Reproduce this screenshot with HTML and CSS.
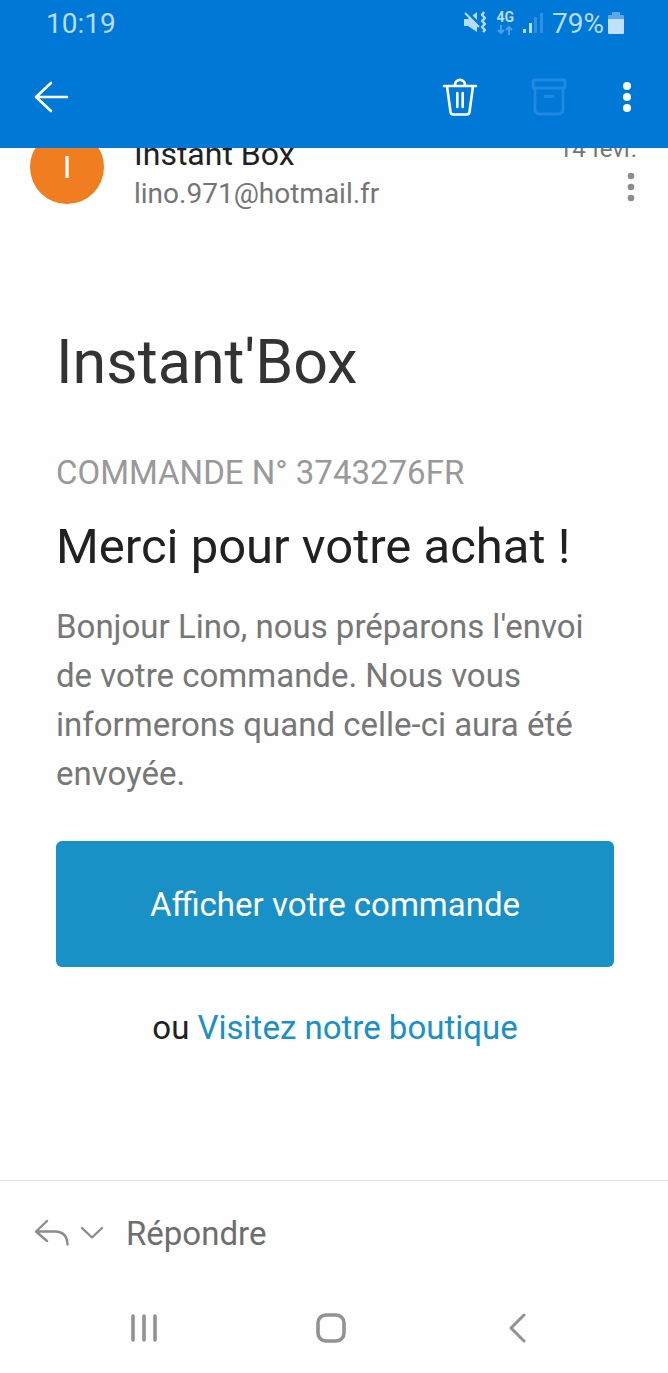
FILE: index.html
```html
<!DOCTYPE html>
<html lang="fr">
<head>
<meta charset="utf-8">
<meta name="viewport" content="width=device-width, initial-scale=1">
<title>Instant'Box – Commande</title>
<link rel="stylesheet" href="styles.css">
</head>
<body>
<div class="screen">
  <header class="top">
    <div class="status">
      <span class="clock">10:19</span>
      <div class="status-icons">
        <svg width="24" height="24" viewBox="0 0 24 24" aria-hidden="true">
          <path d="M1 8h4l9-7v20l-9-6H1z" fill="#b8dcfa"/>
          <path d="M3 0L17 14" stroke="#0078d7" stroke-width="3"/>
          <path d="M2 2L16 16" stroke="#b8dcfa" stroke-width="2"/>
          <path d="M21 1l-2 3 3 3-3 3 3 3-3 3 3 3-2 2" fill="none" stroke="#b8dcfa" stroke-width="2.4" stroke-linejoin="round"/>
        </svg>
        <div class="network">
          <span class="network-label">4G</span>
          <svg width="16" height="10" viewBox="0 0 16 10" fill="none" stroke="#4a9fe6" stroke-width="2" aria-hidden="true">
            <path d="M4 0v8M1 5l3 3 3-3M12 10V2M9 5l3-3 3 3"/>
          </svg>
        </div>
        <svg width="20" height="22" viewBox="0 0 20 22" aria-hidden="true">
          <path d="M0 17h3v4H0zM6 11h3v10H6z" fill="#b8dcfa"/>
          <path d="M11 5h3v16h-3zM17 1h3v20h-3z" fill="#3390e0"/>
        </svg>
        <div class="battery">
          <span>79%</span>
          <svg width="16" height="22" viewBox="0 0 16 22" aria-hidden="true">
            <path d="M4 0h8v3h3a1 1 0 0 1 1 1v3H0V4a1 1 0 0 1 1-1h3z" fill="#5aa9ea"/>
            <path d="M0 7h16v14a1 1 0 0 1-1 1H1a1 1 0 0 1-1-1z" fill="#c2e0fa"/>
          </svg>
        </div>
      </div>
    </div>
    <div class="toolbar">
      <button class="icon-button back" aria-label="Retour">
        <svg width="36" height="32" viewBox="0 0 36 32" fill="none" stroke="#fff" stroke-width="2.6" stroke-linecap="round" stroke-linejoin="round"><path d="M33 16H2M17 2L2 16l15 14"/></svg>
      </button>
      <button class="icon-button" aria-label="Supprimer">
        <svg width="36" height="40" viewBox="0 0 36 40" fill="none" stroke="#fff" stroke-width="2.6" stroke-linecap="round" stroke-linejoin="round"><path d="M2 9h32M5 9l3.500 26q.4 2.500 3 2.500h13q2.600 0 3-2.500L31 9M13 8.500C13 1 23 1 23 8.500M15.300 16v14M20.700 16v14"/></svg>
      </button>
      <button class="icon-button archive" aria-label="Archiver" disabled>
        <svg width="36" height="38" viewBox="0 0 36 38" fill="none" stroke="#2189e0" stroke-width="2.800" stroke-linecap="round" stroke-linejoin="round"><rect x="2" y="2" width="32" height="8" rx="1"/><path d="M4 10v21q0 5 5 5h18q5 0 5-5V10M14 18.500h8"/></svg>
      </button>
      <button class="icon-button" aria-label="Plus d'options">
        <svg width="10" height="32" viewBox="0 0 10 32" fill="#fff"><circle cx="5" cy="5" r="4"/><circle cx="5" cy="16" r="4"/><circle cx="5" cy="27" r="4"/></svg>
      </button>
    </div>
  </header>

  <main class="message">
    <section class="sender">
      <div class="avatar">I</div>
      <div class="identity">
        <div class="name">Instant Box</div>
        <div class="address">lino.971@hotmail.fr</div>
      </div>
      <div class="meta">
        <time class="date">14 févr.</time>
        <button class="icon-button" aria-label="Options du message">
          <svg width="12" height="30" viewBox="0 0 12 30" fill="#8c8c8c"><circle cx="6" cy="4" r="3.300"/><circle cx="6" cy="15" r="3.300"/><circle cx="6" cy="26" r="3.300"/></svg>
        </button>
      </div>
    </section>

    <article class="mail">
      <h1 class="shop">Instant'Box</h1>
      <p class="order">COMMANDE N° 3743276FR</p>
      <h2 class="thanks">Merci pour votre achat !</h2>
      <p class="body-text">Bonjour Lino, nous préparons l'envoi de votre commande. Nous vous informerons quand celle-ci aura été envoyée.</p>
      <a class="cta" href="#">Afficher votre commande</a>
      <p class="visit">ou <a href="#">Visitez notre boutique</a></p>
    </article>
  </main>

  <footer class="bottom">
    <div class="reply">
      <button class="icon-button" aria-label="Répondre à l'expéditeur">
        <svg width="36" height="28" viewBox="0 0 36 28" fill="none" stroke="#8c8c8c" stroke-width="2.400" stroke-linecap="round" stroke-linejoin="round"><path d="M13 2L2 12.500 13 22M2 12.500h19q12 0 12.500 13"/></svg>
      </button>
      <button class="icon-button" aria-label="Choisir le type de réponse">
        <svg width="24" height="14" viewBox="0 0 24 14" fill="none" stroke="#8c8c8c" stroke-width="2.400" stroke-linecap="round" stroke-linejoin="round"><path d="M2 2l10 9.500L22 2"/></svg>
      </button>
      <button class="reply-label">Répondre</button>
    </div>
    <nav class="system" aria-label="Navigation système">
      <button class="icon-button" aria-label="Applications récentes">
        <svg width="30" height="30" viewBox="0 0 30 30" stroke="#929292" stroke-width="3.600" stroke-linecap="round"><path d="M4 3v24M15 3v24M26 3v24"/></svg>
      </button>
      <button class="icon-button" aria-label="Accueil">
        <svg width="30" height="30" viewBox="0 0 30 30" fill="none" stroke="#929292" stroke-width="3.600"><rect x="2" y="2" width="26" height="26" rx="8"/></svg>
      </button>
      <button class="icon-button" aria-label="Page précédente">
        <svg width="30" height="30" viewBox="0 0 30 30" fill="none" stroke="#929292" stroke-width="3" stroke-linecap="round" stroke-linejoin="round"><path d="M21 2L8 15l13 13"/></svg>
      </button>
    </nav>
  </footer>
</div>
</body>
</html>
```

FILE: styles.css
```css
* {
  box-sizing: border-box;
}

body,
h1,
h2,
p {
  margin: 0;
  font-weight: 400;
}

body {
  background: #fefefe;
  color: #212121;
  font-family: Roboto, "Liberation Sans", sans-serif;
  font-size: 33px;
}

a {
  color: #1990c6;
  text-decoration: none;
}

button {
  padding: 0;
  border: 0;
  background: none;
  font: inherit;
}

svg {
  display: block;
}

.icon-button {
  display: flex;
}

.screen {
  display: flex;
  flex-direction: column;
  min-height: 100vh;
}

.top {
  position: relative;
  z-index: 1;
  background: #0078d7;
  color: #b8dcfa;
}

.status {
  display: flex;
  align-items: center;
  justify-content: space-between;
  height: 46px;
  padding: 0 44px 0 46px;
  font-size: 28px;
}

.status-icons {
  display: flex;
  align-items: center;
  gap: 9px;
}

.battery {
  display: flex;
  align-items: center;
  gap: 4px;
}

.network {
  display: flex;
  flex-direction: column;
  align-items: center;
  gap: 1px;
}

.network-label {
  font-size: 14px;
  font-weight: 700;
  line-height: 13px;
}

.toolbar {
  display: flex;
  align-items: center;
  height: 102px;
  padding: 0 36px 0 34px;
}

.back {
  margin-right: auto;
}

.archive {
  margin: 0 55px 0 53px;
}

.message {
  flex: 1;
}

.sender {
  display: flex;
  margin-top: -18px;
  padding: 0 31px 0 30px;
}

.avatar {
  display: flex;
  align-items: center;
  justify-content: center;
  width: 74px;
  height: 74px;
  border-radius: 50%;
  background: #f07d20;
  color: #fefefe;
  font-size: 32px;
}

.identity {
  flex: 1;
  margin-left: 30px;
  padding-top: 4px;
  line-height: 40px;
}

.name {
  font-size: 32px;
}

.address {
  color: #757575;
  font-size: 28px;
}

.meta {
  display: flex;
  flex-direction: column;
  align-items: flex-end;
  gap: 4px;
  color: #757575;
  font-size: 24px;
  line-height: 38px;
}

.mail {
  padding: 112px 54px 128px 56px;
}

.shop {
  color: #333;
  font-size: 61px;
  line-height: 72px;
}

.order {
  margin-top: 55px;
  color: #999;
  line-height: 40px;
}

.thanks {
  margin-top: 24px;
  font-size: 49px;
  line-height: 60px;
}

.body-text {
  margin-top: 25px;
  color: #777;
  line-height: 49px;
}

.cta {
  display: flex;
  align-items: center;
  justify-content: center;
  margin-top: 43px;
  min-height: 126px;
  border-radius: 6px;
  background: #1990c6;
  color: #fefefe;
}

.visit {
  margin-top: 36px;
  line-height: 49px;
  text-align: center;
}

.bottom {
  border-top: 1px solid #e0e0e0;
}

.reply {
  display: flex;
  align-items: center;
  gap: 10px;
  height: 104px;
  padding: 0 34px;
}

.reply-label {
  margin-left: 12px;
  color: #6e6e6e;
}

.system {
  display: grid;
  grid-template-columns: repeat(3, 1fr);
  align-items: center;
  justify-items: center;
  height: 88px;
  padding: 0 56px 2px 50px;
}
```
